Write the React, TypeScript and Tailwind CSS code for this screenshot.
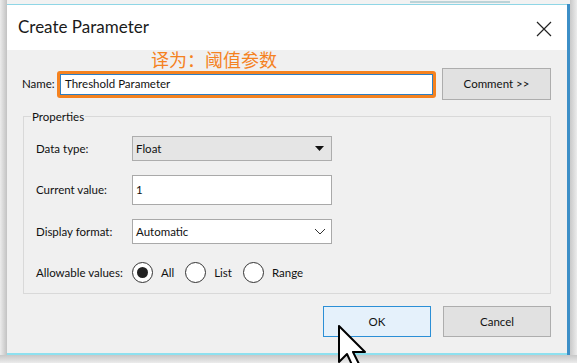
import React from 'react';

const ui = { fontFamily: 'Lato, "Noto Sans", sans-serif' };
const cjk = { fontFamily: '"Noto Sans CJK SC", "Noto Sans", sans-serif' };

function Radio({ label, checked }: { label: string; checked?: boolean }) {
  return (
    <div className="flex items-center gap-[8px]">
      <span className="flex h-[21px] w-[21px] items-center justify-center rounded-full border border-[#333] bg-white">
        {checked && <span className="h-[11px] w-[11px] rounded-full bg-[#222]" />}
      </span>
      <span>{label}</span>
    </div>
  );
}

function Row({ label, children }: { label: string; children: React.ReactNode }) {
  return (
    <div className="flex items-center">
      <span className="w-[96px] shrink-0">{label}</span>
      {children}
    </div>
  );
}

export default function App() {
  return (
    <div className="relative h-[363px] w-[577px] overflow-hidden bg-[#e4e4e4]" style={ui}>
      {/* window behind, peeking at the edges */}
      <div className="absolute left-0 top-0 h-[4px] w-full bg-[#f2f2f2]" />
      <div className="absolute left-[7px] top-[4px] h-[2px] w-[562px] bg-[#8fd6e6]" />
      <div className="absolute left-[410px] top-[1px] h-[2px] w-[100px] bg-[#6aa6b2] opacity-40" />
      <div className="absolute right-[7px] top-[4px] h-[355px] w-[3px] bg-[#3d8fc7]" />
      <div className="absolute right-0 top-0 h-full w-[7px] bg-gradient-to-r from-[#c9c9c9] to-[#ececec]" />
      <div className="absolute left-0 top-0 h-full w-[7px] bg-gradient-to-r from-[#ececec] to-[#c2c2c2]" />
      <div className="absolute left-0 bottom-0 h-[8px] w-full bg-gradient-to-b from-[#c8c8c8] to-[#ececec]" />

      {/* dialog */}
      <div className="relative ml-[7px] mt-[5px] flex h-[350px] w-[560px] flex-col border-b-[2px] border-[#8ee0ef] bg-[#f0f0f0] text-[11.5px] text-[#111]">
        <div className="flex h-[45px] shrink-0 items-center justify-between bg-white pl-[11px] pr-[15px]">
          <span className="pb-[2px] text-[17px] text-[#1a1a1a]">Create Parameter</span>
          <svg width="16" height="16" viewBox="0 0 16 16" className="mt-[2px]">
            <path d="M1 1 L15 15 M15 1 L1 15" stroke="#222" strokeWidth="1.2" fill="none" />
          </svg>
        </div>

        <div className="h-[18px] pl-[144px] text-[18px] leading-[18px] text-[#f5821f]" style={cjk}>
          译为：阈值参数
        </div>

        <div className="flex h-[32px] items-center pl-[15px]">
          <span className="w-[35px]">Name:</span>
          <div className="flex h-[27px] w-[379px] items-center rounded-[3px] border-[3px] border-[#f5821f] bg-[#f5821f] p-0">
            <div className="flex h-full w-full items-center border border-[#2d7fc4] bg-white px-[4px]">
              Threshold Parameter
            </div>
          </div>
          <button className="ml-[6px] flex h-[32px] w-[109px] items-center justify-center border border-[#adadad] bg-[#e1e1e1]">
            Comment &gt;&gt;
          </button>
        </div>

        <div className="relative ml-[16px] mt-[16px] h-[178px] w-[528px] border border-[#d9d9d9] pl-[12px] pt-[19px]">
          <span className="absolute left-[7px] top-[-9px] bg-[#f0f0f0] px-[1px]">Properties</span>
          <div className="flex flex-col gap-[14px]">
            <Row label="Data type:">
              <div className="flex h-[25px] w-[200px] items-center justify-between border border-[#adadad] bg-[#e5e5e5] pl-[3px] pr-[7px]">
                <span>Float</span>
                <svg width="9" height="5" viewBox="0 0 9 5">
                  <path d="M0 0 L9 0 L4.5 5 Z" fill="#111" />
                </svg>
              </div>
            </Row>
            <Row label="Current value:">
              <div className="flex h-[30px] w-[200px] items-center border border-[#a9a9a9] bg-white pl-[3px]">1</div>
            </Row>
            <Row label="Display format:">
              <div className="flex h-[25px] w-[200px] items-center justify-between border border-[#a9a9a9] bg-white pl-[3px] pr-[5px]">
                <span>Automatic</span>
                <svg width="12" height="7" viewBox="0 0 12 7">
                  <path d="M1 1 L6 6 L11 1" stroke="#333" strokeWidth="1" fill="none" />
                </svg>
              </div>
            </Row>
            <div className="mt-[4px]">
              <Row label="Allowable values:">
                <div className="flex items-center gap-[11px]">
                  <Radio label="All" checked />
                  <Radio label="List" />
                  <Radio label="Range" />
                </div>
              </Row>
            </div>
          </div>
        </div>

        <div className="mt-[12px] flex justify-end gap-[12px] pr-[16px]">
          <button className="flex h-[31px] w-[108px] items-center justify-center border border-[#2b8fd6] bg-[#e5f1fb]">OK</button>
          <button className="flex h-[31px] w-[108px] items-center justify-center border border-[#adadad] bg-[#e1e1e1]">Cancel</button>
        </div>
      </div>

      {/* mouse pointer */}
      <svg className="absolute left-[338px] top-[325px]" width="30" height="44" viewBox="0 0 30 44">
        <path d="M1 1 L1 37 L9 29 L15 42 L21 39 L15 27 L27 27 Z" fill="#fff" stroke="#000" strokeWidth="2" strokeLinejoin="round" />
      </svg>
    </div>
  );
}
